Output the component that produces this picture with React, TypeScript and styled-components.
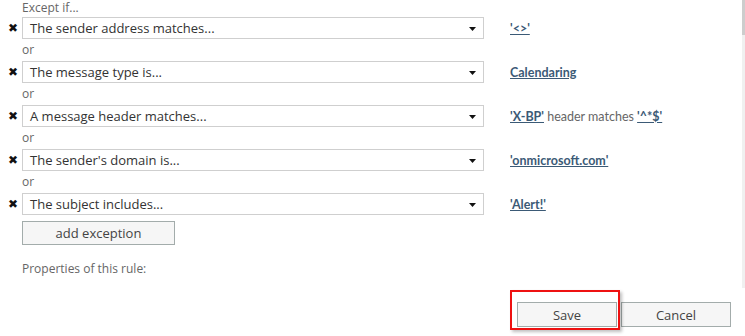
import React from "react";
import styled, { createGlobalStyle } from "styled-components";

const Global = createGlobalStyle`
  html, body { margin: 0; padding: 0; background: #ffffff; }
  body { font-family: "Segoe UI", "Open Sans", Lato, sans-serif; color: #333333; }
`;

const Page = styled.div`
  display: flex;
  width: 745px;
  height: 336px;
  overflow: hidden;
`;

const Content = styled.div`
  flex: 1;
  display: flex;
  flex-direction: column;
  padding-left: 8px;
`;

const SmallLabel = styled.div<{ $h: number; $top?: number }>`
  height: ${(p) => p.$h}px;
  padding-left: 14px;
  padding-top: ${(p) => p.$top ?? 0}px;
  box-sizing: border-box;
  font-size: 12px;
  line-height: 14px;
  color: #666666;
`;

const Row = styled.div`
  display: flex;
  align-items: center;
  height: 22px;
`;

const Remove = styled.span`
  width: 14px;
  font-family: "DejaVu Sans", sans-serif;
  font-size: 12px;
  color: #111111;
  line-height: 22px;
`;

const Select = styled.div`
  box-sizing: border-box;
  width: 462px;
  height: 22px;
  border: 1px solid #cfcfcf;
  background: #ffffff;
  display: flex;
  align-items: center;
  justify-content: space-between;
  padding: 0 7px 0 7px;
  font-size: 13px;
  color: #333333;
`;

const Caret = styled.svg`
  width: 7px;
  height: 4px;
  margin-top: 2px;
`;

const Value = styled.div`
  margin-left: 26px;
  font-family: Lato, "Open Sans", sans-serif;
  font-size: 12.5px;
  color: #666666;
  white-space: nowrap;
`;

const Link = styled.a`
  color: #3b5a76;
  font-weight: 700;
  text-decoration: underline;
  cursor: pointer;
`;

const Gap = styled.div<{ $h: number }>`
  height: ${(p) => p.$h}px;
`;

const Button = styled.button<{ $w: number; $h: number }>`
  box-sizing: border-box;
  width: ${(p) => p.$w}px;
  height: ${(p) => p.$h}px;
  border: 1px solid #a3acab;
  background: #f6f6f6;
  font-family: "Segoe UI", "Open Sans", Lato, sans-serif;
  font-size: 13px;
  color: #444444;
  padding: 0;
  margin: 0;
`;

const AddWrap = styled.div`
  padding-left: 14px;
`;

const Footer = styled.div`
  display: flex;
  justify-content: flex-end;
  gap: 4px;
  padding-right: 11px;
`;

const Highlight = styled.div`
  position: relative;
`;

const RedBox = styled.div`
  position: absolute;
  left: -7px;
  top: -12px;
  width: 110px;
  height: 40px;
  box-sizing: border-box;
  border: 2px solid #ee1111;
  box-shadow: 2px 2px 3px rgba(0, 0, 0, 0.25);
  pointer-events: none;
`;

const ScrollTrack = styled.div`
  width: 3px;
  height: 288px;
  background: #f0f0f0;
  display: flex;
  flex-direction: column;
`;

const Thumb = styled.div`
  height: 35px;
  background: #cdcdcd;
`;

type Cond = { label: string; value: React.ReactNode };

const conditions: Cond[] = [
  { label: "The sender address matches...", value: <Link>'&lt;&gt;'</Link> },
  { label: "The message type is...", value: <Link>Calendaring</Link> },
  {
    label: "A message header matches...",
    value: (
      <>
        <Link>'X-BP'</Link> header matches <Link>'^*$'</Link>
      </>
    ),
  },
  { label: "The sender's domain is...", value: <Link>'onmicrosoft.com'</Link> },
  { label: "The subject includes...", value: <Link>'Alert!'</Link> },
];

export default function App() {
  return (
    <Page>
      <Global />
      <Content>
        <SmallLabel $h={17} $top={1}>Except if...</SmallLabel>
        {conditions.map((c, i) => (
          <React.Fragment key={i}>
            {i > 0 && <SmallLabel $h={22} $top={4}>or</SmallLabel>}
            <Row>
              <Remove>✖</Remove>
              <Select>
                <span>{c.label}</span>
                <Caret viewBox="0 0 7 4">
                  <path d="M0 0H7L3.5 4Z" fill="#111" />
                </Caret>
              </Select>
              <Value>{c.value}</Value>
            </Row>
          </React.Fragment>
        ))}
        <Gap $h={6} />
        <AddWrap>
          <Button $w={153} $h={24}>add exception</Button>
        </AddWrap>
        <SmallLabel $h={57} $top={17}>Properties of this rule:</SmallLabel>
        <Footer>
          <Highlight>
            <Button $w={100} $h={25}>Save</Button>
            <RedBox />
          </Highlight>
          <Button $w={110} $h={25}>Cancel</Button>
        </Footer>
      </Content>
      <ScrollTrack>
        <Thumb />
      </ScrollTrack>
    </Page>
  );
}
